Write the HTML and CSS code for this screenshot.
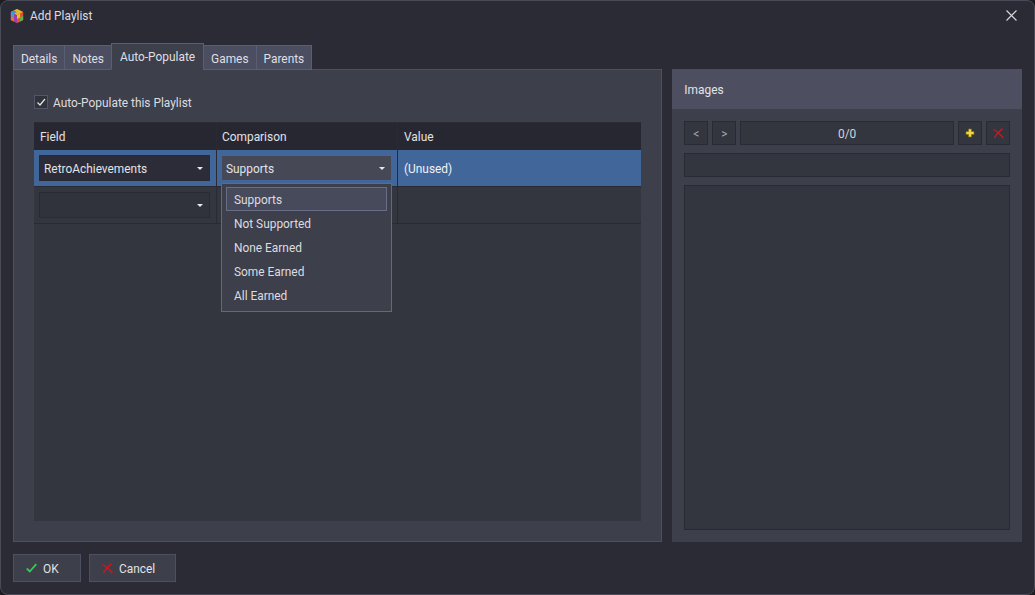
FILE: index.html
```html
<!DOCTYPE html>
<html lang="en">

<head>
  <meta charset="UTF-8" />
  <meta name="viewport" content="width=device-width, initial-scale=1.0" />
  <title>Add Playlist</title>
  <link rel="stylesheet" href="styles.css">
</head>

<body>
  <div class="window">

    <header class="titlebar">
      <svg class="app-icon" width="14" height="14" viewBox="0 0 16 16">
        <path d="M8 0l7 3.500v9L8 16l-7-3.500v-9z" fill="#c23a3a" />
        <path d="M8 0l7 3.500L8 7 1 3.500z" fill="#e8b820" />
        <path d="M1 3.500L8 7v9l-7-3.500z" fill="#a03ab0" />
        <path d="M15 3.500v9L8 16V7z" fill="#e0503a" />
        <path d="M4.500 1.800l3.500 1.700L4.500 5.300 1 3.500z" fill="#3890e0" />
        <path d="M1 3.500L4.500 5.300v4.500L1 8z" fill="#30a8d8" />
        <path d="M1 8l3.500 1.800v4.500L1 12.500z" fill="#e87820" />
        <path d="M11.500 9.800L15 8v4.500l-3.500 1.800z" fill="#58b840" />
        <path d="M8 7l3.500-1.800v4.500L8 11.500z" fill="#d8c820" />
      </svg>
      <span class="title">Add Playlist</span>
      <svg class="close-icon" width="11" height="11" viewBox="0 0 11 11">
        <path d="M.5.5l10 10M10.500.5l-10 10" stroke="#d8d8dc" stroke-width="1.1" fill="none" />
      </svg>
    </header>

    <div class="content">
      <section class="left">
        <nav class="tabs">
          <div class="tab">Details</div>
          <div class="tab">Notes</div>
          <div class="tab active">Auto-Populate</div>
          <div class="tab">Games</div>
          <div class="tab">Parents</div>
        </nav>

        <div class="tab-panel">
          <label class="check-row">
            <span class="checkbox">
              <svg width="10" height="10" viewBox="0 0 10 10">
                <path d="M1.500 5.500l2.500 2.500 5-6" stroke="#e4e4e8" stroke-width="1.2" fill="none" />
              </svg>
            </span>
            <span class="check-label">Auto-Populate this Playlist</span>
          </label>

          <div class="grid">
            <div class="grid-row head">
              <div class="cell">Field</div>
              <div class="cell">Comparison</div>
              <div class="cell">Value</div>
            </div>
            <div class="grid-row selected">
              <div class="cell">
                <div class="combo dark">RetroAchievements<span class="caret"></span></div>
              </div>
              <div class="cell">
                <div class="combo open">Supports<span class="caret"></span></div>
                <ul class="dropdown">
                  <li class="current">Supports</li>
                  <li>Not Supported</li>
                  <li>None Earned</li>
                  <li>Some Earned</li>
                  <li>All Earned</li>
                </ul>
              </div>
              <div class="cell text">(Unused)</div>
            </div>
            <div class="grid-row">
              <div class="cell">
                <div class="combo blank"><span class="caret"></span></div>
              </div>
              <div class="cell"></div>
              <div class="cell"></div>
            </div>
          </div>
        </div>
      </section>

      <aside class="images">
        <div class="images-head">Images</div>
        <div class="images-body">
          <div class="pager">
            <div class="btn-small arrow">&lt;</div>
            <div class="btn-small arrow">&gt;</div>
            <div class="counter">0/0</div>
            <div class="btn-small">
              <svg width="10" height="10" viewBox="0 0 10 10">
                <path d="M3.500 1h3v2.500H9v3H6.500V9h-3V6.500H1v-3h2.500z" fill="#f0d838" stroke="#7d6a20" stroke-width=".7" />
              </svg>
            </div>
            <div class="btn-small">
              <svg width="11" height="11" viewBox="0 0 11 11">
                <path d="M.5 1.500c3.500 1.500 6 4.500 10 8.500M9.500.5C7 3 3.500 6 1.500 10" stroke="#d8141c" stroke-width="1.300" fill="none" />
              </svg>
            </div>
          </div>
          <div class="name-field"></div>
          <div class="preview"></div>
        </div>
      </aside>
    </div>

    <footer class="actions">
      <div class="button ok">
        <svg width="11" height="10" viewBox="0 0 11 10">
          <path d="M.8 5.500l3 3L10.300 1.200" stroke="#2cd04a" stroke-width="1.800" fill="none" />
        </svg>
        OK
      </div>
      <div class="button cancel">
        <svg width="11" height="11" viewBox="0 0 11 11">
          <path d="M.5 1.500c3.500 1.500 6 4.500 10 8.500M9.500.5C7 3 3.500 6 1.500 10" stroke="#d8141c" stroke-width="1.300" fill="none" />
        </svg>
        Cancel
      </div>
    </footer>

  </div>
</body>

</html>
```

FILE: styles.css
```css
* {
  box-sizing: border-box;
}

html,
body {
  height: 100%;
}

body {
  margin: 0;
  background: #1c1c22;
  color: #e2e2e6;
  font-family: Roboto, "Open Sans", sans-serif;
  font-size: 11.9px;
}

.window {
  height: 595px;
  display: flex;
  flex-direction: column;
  background: #2b2b35;
  border: 1px solid #4a4b56;
  border-radius: 8px;
  overflow: hidden;
}

.titlebar {
  height: 29px;
  flex: none;
  display: flex;
  align-items: center;
  padding: 0 17px 0 9px;
}

.title {
  margin-left: 6px;
  flex: 1;
  padding-top: 1px;
  color: #dcdce0;
}

.content {
  flex: 1;
  display: flex;
  gap: 10px;
  padding: 12px 12px 0;
  min-height: 0;
}

/* left side: tabs and table */
.left {
  width: 650px;
  display: flex;
  flex-direction: column;
}

.tabs {
  height: 27px;
  flex: none;
  display: flex;
  align-items: flex-end;
  position: relative;
  z-index: 1;
}

.tab {
  height: 25px;
  margin-bottom: -1px;
  padding: 2px 7px 0;
  display: flex;
  align-items: center;
  background: #4b4e60;
  border: 1px solid #5a5e72;
  color: #dfdfe4;
}

.tab + .tab {
  margin-left: -1px;
}

.tab.active {
  height: 27px;
  padding: 0 8px;
  background: #3d3f4b;
  border-bottom-color: #3d3f4b;
}

.tab-panel {
  height: 473px;
  background: #3d3f4b;
  border: 1px solid #4d5062;
  padding: 24px 20px 20px;
}

.check-row {
  display: flex;
  align-items: center;
  gap: 5px;
  height: 16px;
  color: #dcdce0;
}

.check-label {
  padding-top: 2px;
}

.checkbox {
  width: 14px;
  height: 14px;
  display: flex;
  align-items: center;
  justify-content: center;
  background: #30323c;
  border: 1px solid #52566a;
}

.grid {
  height: 399px;
  margin-top: 12px;
  background: #33353f;
  border-top: 1px solid #2b2b35;
}

.grid-row {
  display: grid;
  grid-template-columns: 183px 181px 1fr;
  height: 37px;
  border-bottom: 1px solid #292a33;
}

.grid-row.head {
  height: 27px;
  background: #272731;
  border-bottom: 0;
}

.grid-row.head .cell:nth-child(2) {
  padding-left: 5px;
}

.grid-row.selected {
  height: 37px;
  background: #41669a;
  color: #f2f2f4;
}

.cell {
  position: relative;
  display: flex;
  align-items: center;
  padding: 0 6px;
  border-right: 1px solid #292a33;
}

.cell.text {
  padding-top: 2px;
}

.cell:last-child {
  border-right: 0;
}

.combo {
  position: relative;
  width: 171px;
  height: 26px;
  margin-left: -1px;
  padding: 2px 4px 0;
  display: flex;
  align-items: center;
  color: #e2e2e6;
  background: #30323c;
  border: 1px solid #292a33;
}

.combo.dark {
  background: #2b2c37;
}

.combo.open {
  width: 169px;
  height: 24px;
  background: #464856;
  border: 0;
}

.caret {
  position: absolute;
  right: 6px;
  top: 50%;
  margin-top: -1px;
  border-left: 3px solid transparent;
  border-right: 3px solid transparent;
  border-top: 3px solid #e8e8ec;
}

/* open list of the comparison combo */
.dropdown {
  position: absolute;
  left: 4px;
  top: 33px;
  width: 171px;
  height: 129px;
  margin: 0;
  padding: 3px 4px;
  list-style: none;
  background: #3d3f4b;
  border: 1px solid #4f6d98;
  color: #dcdce0;
  z-index: 2;
}

.dropdown li {
  height: 24px;
  padding: 2px 8px 0;
  display: flex;
  align-items: center;
}

.dropdown li.current {
  background: #474a5a;
  border: 1px solid #696d88;
  padding-left: 7px;
}

/* right side: images */
.images {
  width: 350px;
  height: 473px;
  margin-top: 27px;
  display: flex;
  flex-direction: column;
  background: #3d3f4b;
}

.images-head {
  height: 40px;
  flex: none;
  display: flex;
  align-items: center;
  padding: 2px 12px 0;
  background: #4d4f60;
  color: #e4e4e8;
}

.images-body {
  flex: 1;
  display: flex;
  flex-direction: column;
  gap: 8px;
  padding: 12px;
}

.pager {
  display: flex;
  gap: 4px;
  height: 24px;
}

.btn-small {
  width: 24px;
  flex: none;
  display: flex;
  align-items: center;
  justify-content: center;
  background: #33353f;
  border: 1px solid #292a33;
}

.btn-small.arrow {
  padding-top: 2px;
  color: #a6a7ae;
}

.counter {
  flex: 1;
  display: flex;
  align-items: center;
  justify-content: center;
  padding-top: 2px;
  background: #33353f;
  border: 1px solid #292a33;
  color: #d4d4d8;
}

.name-field {
  height: 24px;
  flex: none;
  background: #33353f;
  border: 1px solid #292a33;
}

.preview {
  flex: 1;
  background: #33353f;
  border: 1px solid #292a33;
}

/* bottom buttons */
.actions {
  height: 52px;
  flex: none;
  display: flex;
  gap: 8px;
  padding: 12px 12px 0;
}

.button {
  height: 28px;
  display: flex;
  align-items: center;
  gap: 6px;
  padding: 2px 0 0 12px;
  background: #3d3f4b;
  border: 1px solid #4d5062;
  color: #e2e2e6;
}

.button svg {
  margin-top: -2px;
}

.button.ok {
  width: 68px;
}

.button.cancel {
  width: 87px;
}
```
